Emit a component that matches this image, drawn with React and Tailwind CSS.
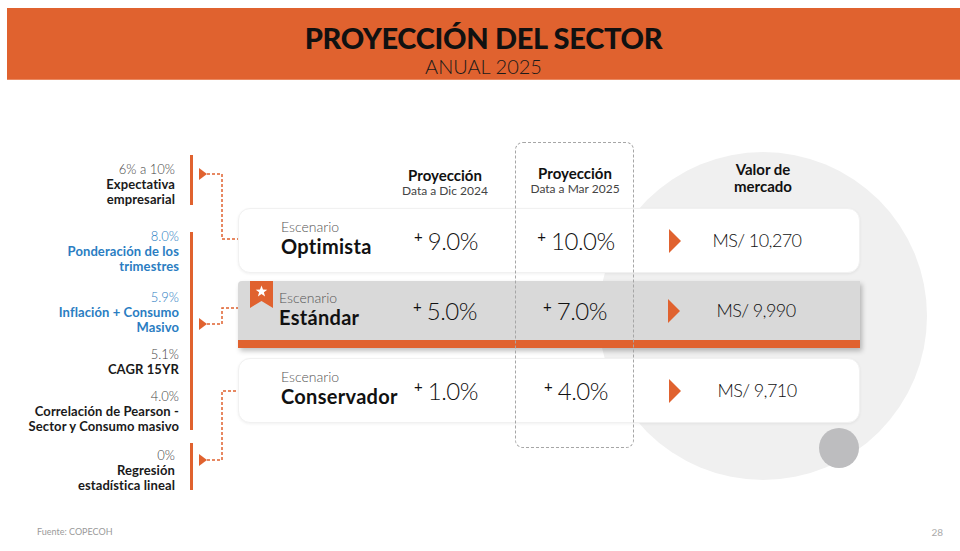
import React from 'react';

const ORANGE = '#e0622f';

const drivers = [
    { pct: '6% a 10%', lines: ['Expectativa', 'empresarial'], blue: false, pr: 'pr-[5px]', mt: 'mt-[20px]' },
    { pct: '8.0%', lines: ['Ponderación de los', 'trimestres'], blue: true, pr: 'pr-[1px]', mt: 'mt-[22px]' },
    { pct: '5.9%', lines: ['Inflación + Consumo', 'Masivo'], blue: true, pr: 'pr-[1px]', mt: 'mt-[16px]' },
    { pct: '5.1%', lines: ['CAGR 15YR'], blue: false, pr: 'pr-[1px]', mt: 'mt-[12px]' },
    { pct: '4.0%', lines: ['Correlación de Pearson -', 'Sector y Consumo masivo'], blue: false, pr: 'pr-[1px]', mt: 'mt-[12px]' },
    { pct: '0%', lines: ['Regresión', 'estadística lineal'], blue: false, pr: 'pr-[5px]', mt: 'mt-[14px]' }
];

const scenarios = [
    { name: 'Optimista', dic: '9.0%', mar: '10.0%', value: 'MS/ 10,270', featured: false },
    { name: 'Estándar', dic: '5.0%', mar: '7.0%', value: 'MS/ 9,990', featured: true },
    { name: 'Conservador', dic: '1.0%', mar: '4.0%', value: 'MS/ 9,710', featured: false }
];

const Growth = ({ v }) => (
    <div className="flex items-start justify-center text-[#111]">
        <span className="text-[15px] leading-[16px] font-normal mr-[5px] mt-[1px]">+</span>
        <span className="text-[24px] leading-[28px] font-light tracking-[-0.5px]">{v}</span>
    </div>
);

const Triangle = () => (
    <svg width="12" height="24" viewBox="0 0 12 24" className="shrink-0">
        <polygon points="0,0 12,12 0,24" fill={ORANGE} />
    </svg>
);

const Bookmark = () => (
    <svg width="23" height="27" viewBox="0 0 23 27">
        <polygon points="0,0 23,0 23,27 11.5,20 0,27" fill={ORANGE} />
        <polygon
            points="11.5,4.5 13,8.6 17.3,8.7 13.9,11.3 15.1,15.5 11.5,13 7.9,15.5 9.1,11.3 5.7,8.7 10,8.6"
            fill="#fff"
        />
    </svg>
);

const ScenarioRow = ({ s }) => (
    <div
        className={
            s.featured
                ? 'relative grid grid-cols-[142px_130px_130px_220px] items-center h-[67px] bg-[#d9d9d9] border-b-[8px] border-[#e0622f] rounded-tl-[4px] shadow-[2px_3px_5px_rgba(0,0,0,0.25)]'
                : 'relative grid grid-cols-[142px_130px_130px_220px] items-center h-[65px] bg-white rounded-[12px] border border-[#f1f1f1] shadow-[0_1px_3px_rgba(0,0,0,0.06)]'
        }>
        {s.featured && (
            <div className="absolute left-[12px] top-0">
                <Bookmark />
            </div>
        )}
        <div className={s.featured ? 'pl-[41px] pb-[4px] whitespace-nowrap' : 'pl-[42px] pb-[6px] whitespace-nowrap'}>
            <p className="text-[14px] leading-[17px] font-light text-[#555]">Escenario</p>
            <p className="text-[20px] leading-[22px] font-bold tracking-[0.3px] text-[#111]">{s.name}</p>
        </div>
        <Growth v={s.dic} />
        <Growth v={s.mar} />
        <div className="flex items-center pl-[28px] pr-[28px]">
            <Triangle />
            <p className="flex-1 text-center text-[18px] font-light tracking-[-0.6px] text-[#111]">{s.value}</p>
        </div>
    </div>
);

const Connectors = () => (
    <svg width="58" height="360" viewBox="0 0 58 360" className="shrink-0">
        <rect x="10" y="13" width="3" height="50" fill={ORANGE} />
        <rect x="10" y="90" width="3" height="198" fill={ORANGE} />
        <rect x="10" y="301" width="3" height="47" fill={ORANGE} />

        <polygon points="19,26 27,32 19,38" fill={ORANGE} />
        <polygon points="19,176 27,182 19,188" fill={ORANGE} />
        <polygon points="19,312 27,318 19,324" fill={ORANGE} />

        <g fill="none" stroke={ORANGE} strokeWidth="1.5" strokeDasharray="3 2">
            <path d="M27 32 H42 V97 H58" />
            <path d="M27 182 H42 V166 H58" />
            <path d="M27 318 H42 V249 H58" />
        </g>
    </svg>
);

const App = () => {
    return (
        <div className="w-[960px] h-[551px] bg-white flex flex-col overflow-hidden font-['Lato',sans-serif]">
            <header className="ml-[7px] mt-[8px] h-[72px] bg-[#e0622f] border-b border-[#e98a62] text-center">
                <h1 className="pt-[14px] text-[29px] leading-[32px] font-black tracking-[-0.3px] text-[#111]">
                    PROYECCIÓN DEL SECTOR
                </h1>
                <h2 className="mt-[1px] text-[20px] leading-[22px] font-light text-[#1a1a1a]">
                    ANUAL 2025
                </h2>
            </header>

            <main className="flex mt-[62px]">
                <div className="w-[180px] shrink-0 text-right">
                    {drivers.map((d) => (
                        <div key={d.pct} className={`${d.mt} ${d.pr}`}>
                            <p className={d.blue ? 'text-[13px] leading-[15px] font-light text-[#2a7dc2]' : 'text-[13px] leading-[15px] font-light text-[#444]'}>
                                {d.pct}
                            </p>
                            {d.lines.map((l) => (
                                <p key={l} className={d.blue ? 'text-[13px] leading-[15px] font-bold tracking-[0.1px] text-[#2a7dc2] whitespace-nowrap' : 'text-[13px] leading-[15px] font-bold tracking-[0.1px] text-[#1a1a1a] whitespace-nowrap'}>
                                    {l}
                                </p>
                            ))}
                        </div>
                    ))}
                </div>

                <Connectors />

                <div className="relative w-[622px] shrink-0">
                    {/* background circle */}
                    <div className="absolute left-[361px] top-[10px] w-[328px] h-[328px] rounded-full bg-[#f0f0f0]" />

                    <div className="relative z-10 grid grid-cols-[142px_130px_130px_220px] h-[66px] items-start">
                        <div />
                        <div className="pt-[25px] text-center">
                            <p className="text-[15px] leading-[17px] font-bold text-[#111]">Proyección</p>
                            <p className="text-[12px] leading-[14px] text-[#444]">Data a Dic 2024</p>
                        </div>
                        <div className="pt-[23px] text-center">
                            <p className="text-[15px] leading-[17px] font-bold text-[#111]">Proyección</p>
                            <p className="text-[12px] leading-[14px] text-[#444]">Data a Mar 2025</p>
                        </div>
                        <div className="pt-[19px] pl-[26px] text-center">
                            <p className="text-[15px] leading-[17px] font-bold text-[#111]">Valor de</p>
                            <p className="text-[15px] leading-[17px] font-bold text-[#111]">mercado</p>
                        </div>
                    </div>

                    <div className="relative z-10 flex flex-col">
                        <ScenarioRow s={scenarios[0]} />
                        <div className="mt-[8px]">
                            <ScenarioRow s={scenarios[1]} />
                        </div>
                        <div className="mt-[10px]">
                            <ScenarioRow s={scenarios[2]} />
                        </div>
                    </div>

                    {/* small grey dot */}
                    <div className="absolute z-10 left-[581px] top-[286px] w-[40px] h-[40px] rounded-full bg-[#bdbdbf]" />

                    {/* highlighted column */}
                    <div className="absolute z-20 left-[277px] top-0 w-[119px] h-[306px] rounded-[8px] border-[1.5px] border-dashed border-[#a6a6a6] pointer-events-none" />
                </div>
            </main>

            <footer className="mt-auto flex justify-between items-end pl-[37px] pr-[17px] pb-[13px]">
                <span className="text-[9px] leading-[12px] text-[#9a9a9a]">Fuente: COPECOH</span>
                <span className="text-[10px] leading-[12px] text-[#aaa]">28</span>
            </footer>
        </div>
    );
};

export default App;
